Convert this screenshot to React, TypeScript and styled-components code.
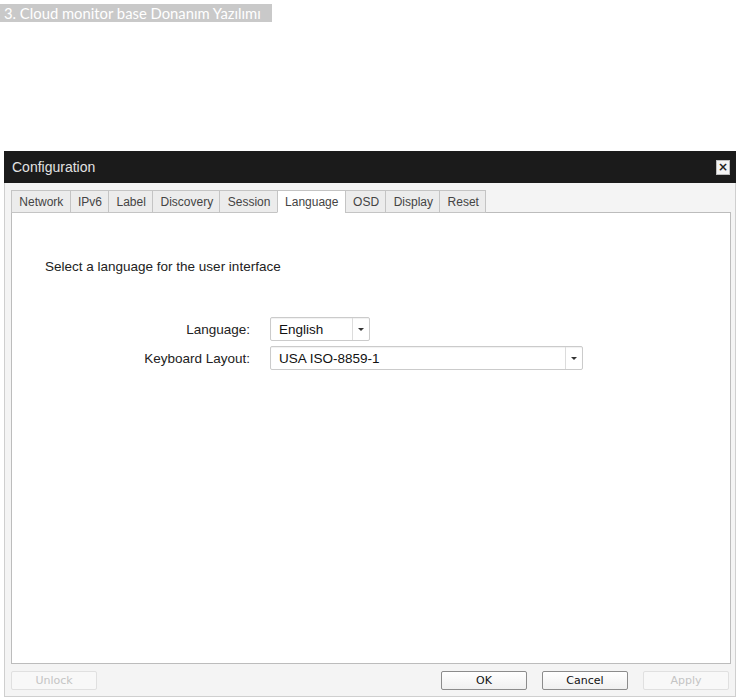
import styled, {createGlobalStyle} from "styled-components";

const GlobalStyle = createGlobalStyle`
  html, body {
    margin: 0;
    padding: 0;
    background: #ffffff;
  }
`;

const Page = styled.div`
  width: 737px;
  height: 700px;
  display: flex;
  flex-direction: column;
  align-items: flex-start;
  overflow: hidden;
  font-family: "Liberation Sans", Arial, sans-serif;
`;

const Caption = styled.div`
  margin-top: 4px;
  height: 18px;
  width: 272px;
  box-sizing: border-box;
  padding-left: 4px;
  background: #c9c9c9;
  color: #ffffff;
  font-family: Lato, "Open Sans", sans-serif;
  font-size: 14.8px;
  line-height: 18px;
  white-space: nowrap;
  overflow: hidden;
`;

const Dialog = styled.div`
  margin: 129px 0 0 4px;
  width: 732px;
  box-sizing: border-box;
  background: #f4f4f4;
  border: 1px solid #cfcfcf;
  border-top: none;
  display: flex;
  flex-direction: column;
`;

const TitleBar = styled.div`
  height: 32px;
  background: #1b1b1b;
  display: flex;
  align-items: center;
  justify-content: space-between;
  padding: 0 6px 0 8px;
  margin: 0 -1px;
`;

const Title = styled.span`
  color: #e2e2e2;
  font-size: 14px;
`;

const CloseButton = styled.div`
  width: 14px;
  height: 15px;
  background: #f4f4f4;
  border: 1px solid #bdbdbd;
  box-sizing: border-box;
  display: flex;
  align-items: center;
  justify-content: center;
  color: #222;
  font-family: "DejaVu Sans", sans-serif;
  font-size: 12px;
  font-weight: bold;
  line-height: 1;
`;

const Body = styled.div`
  padding: 7px 4px 0 6px;
  display: flex;
  flex-direction: column;
`;

const TabRow = styled.div`
  display: flex;
  height: 23px;
  align-items: flex-end;
  position: relative;
  z-index: 1;
  margin-bottom: -1px;
`;

const Tab = styled.div<{ $active?: boolean }>`
  height: 23px;
  box-sizing: border-box;
  padding: 0 6.3px 0 7.3px;
  display: flex;
  align-items: center;
  font-size: 12px;
  color: #444;
  background: ${(p) => (p.$active ? "#ffffff" : "#ececec")};
  border: 1px solid #c4c4c4;
  border-bottom: 1px solid ${(p) => (p.$active ? "#ffffff" : "#c4c4c4")};
  margin-left: -1px;

  &:first-child {
    margin-left: 0;
  }
`;

const Panel = styled.div`
  height: 452px;
  box-sizing: border-box;
  background: #ffffff;
  border: 1px solid #bcbcbc;
  padding: 46px 0 0 33px;
`;

const Intro = styled.div`
  font-size: 13.5px;
  color: #222;
  line-height: 16px;
`;

const Form = styled.div`
  margin-top: 42px;
  display: grid;
  grid-template-columns: 205px auto;
  column-gap: 20px;
  row-gap: 5px;
  align-items: center;
`;

const Label = styled.div`
  text-align: right;
  font-size: 13.5px;
  color: #222;
`;

const Select = styled.div<{ $width: number }>`
  width: ${(p) => p.$width}px;
  height: 24px;
  box-sizing: border-box;
  border: 1px solid #cbcbcb;
  border-radius: 2px;
  box-shadow: inset 0 1px 1px rgba(0, 0, 0, 0.06);
  background: #fff;
  display: flex;
  align-items: stretch;
`;

const SelectValue = styled.div`
  flex: 1;
  padding-left: 8px;
  display: flex;
  align-items: center;
  font-size: 13.5px;
  color: #111;
`;

const SelectArrow = styled.div`
  width: 16px;
  border-left: 1px solid #dcdcdc;
  display: flex;
  align-items: center;
  justify-content: center;

  &::after {
    content: "";
    border-left: 3px solid transparent;
    border-right: 3px solid transparent;
    border-top: 3px solid #333;
  }
`;

const Footer = styled.div`
  display: flex;
  align-items: center;
  padding: 7px 2px 6px 0;
`;

const Spacer = styled.div`
  flex: 1;
`;

const Button = styled.div<{ $disabled?: boolean }>`
  width: 86px;
  height: 19px;
  box-sizing: border-box;
  display: flex;
  align-items: center;
  justify-content: center;
  font-family: "DejaVu Sans", sans-serif;
  font-size: 11px;
  border-radius: 2px;
  border: 1px solid ${(p) => (p.$disabled ? "#e0e0e0" : "#8c8c8c")};
  background: ${(p) =>
    p.$disabled ? "#f8f8f8" : "linear-gradient(#ffffff, #f0f0f0)"};
  color: ${(p) => (p.$disabled ? "#c4c4c4" : "#111")};
  margin-left: 15px;

  &:first-child {
    margin-left: 0;
  }
`;

const tabs = [
  "Network",
  "IPv6",
  "Label",
  "Discovery",
  "Session",
  "Language",
  "OSD",
  "Display",
  "Reset",
];

export default function App() {
  return (
    <Page>
      <GlobalStyle />
      <Caption>3. Cloud monitor base Donanım Yazılımı</Caption>
      <Dialog>
        <TitleBar>
          <Title>Configuration</Title>
          <CloseButton>×</CloseButton>
        </TitleBar>
        <Body>
          <TabRow>
            {tabs.map((t) => (
              <Tab key={t} $active={t === "Language"}>
                {t}
              </Tab>
            ))}
          </TabRow>
          <Panel>
            <Intro>Select a language for the user interface</Intro>
            <Form>
              <Label>Language:</Label>
              <Select $width={100}>
                <SelectValue>English</SelectValue>
                <SelectArrow />
              </Select>
              <Label>Keyboard Layout:</Label>
              <Select $width={313}>
                <SelectValue>USA ISO-8859-1</SelectValue>
                <SelectArrow />
              </Select>
            </Form>
          </Panel>
          <Footer>
            <Button $disabled>Unlock</Button>
            <Spacer />
            <Button>OK</Button>
            <Button>Cancel</Button>
            <Button $disabled>Apply</Button>
          </Footer>
        </Body>
      </Dialog>
    </Page>
  );
}
